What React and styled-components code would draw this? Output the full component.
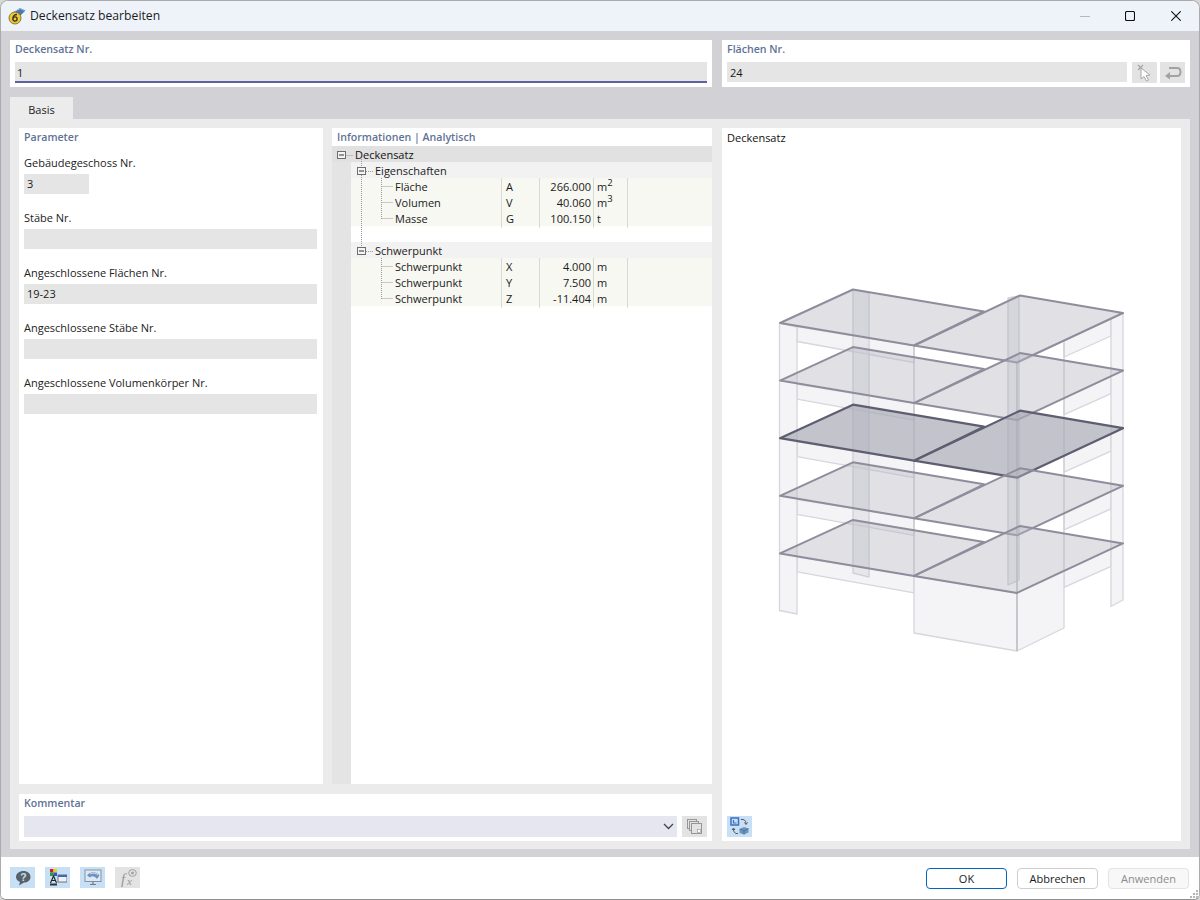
import React from "react";
import styled, { createGlobalStyle } from "styled-components";

const Global = createGlobalStyle`
  html, body { margin: 0; padding: 0; background: #d8d8d8; }
  * { box-sizing: border-box; }
  body { font-family: "Open Sans", "Noto Sans", "Liberation Sans", sans-serif; font-size: 11px; color: #1a1a1a; }
`;

const Win = styled.div`
  width: 1200px; height: 900px; display: flex; flex-direction: column; overflow: hidden;
  border: 1px solid #ababab; border-bottom-color: #8f8f8f; border-radius: 8px 8px 6px 6px; background: #fff;
`;
const TitleBar = styled.div`
  height: 30px; flex: none; display: flex; align-items: center; background: #eef3fa; padding-left: 7px;
`;
const TitleText = styled.div`
  font-size: 12.2px; margin-left: 4px; color: #1c1c1c; flex: 1; padding-bottom: 1px;
`;
const WinButtons = styled.div`display: flex; align-items: center; margin-right: 18px;`;
const WinSlot = styled.div`display: flex; margin-left: ${p => p.$gap || 0}px;`;
const Body = styled.div`
  flex: 1; background: #d2d1d6; padding: 9px 9px 8px; display: flex; flex-direction: column;
`;
const TopRow = styled.div`display: grid; grid-template-columns: 702px 468px; gap: 10px; height: 47px;`;
const TopPanel = styled.div`background: #fff; padding: 2px 5px 0; display: flex; flex-direction: column;`;
const SectionLabel = styled.div`
  font-weight: 600; color: #5f7296; font-size: 10.6px; line-height: 15px; height: 15px; white-space: nowrap;
`;
const FieldRow = styled.div`display: flex; margin-top: 5px; gap: 5px;`;
const PrimaryField = styled.div`
  flex: 1; height: 21px; background: #e5e5e5; border-bottom: 2px solid #5d61a6; padding-left: 2px; line-height: 22px;
`;
const Field = styled.div`
  height: 20px; width: ${p => p.$w ? p.$w + "px" : "auto"}; flex: ${p => p.$fill ? 1 : "none"};
  background: #e5e5e5; padding-left: 3px; line-height: ${p => p.$fill ? 22 : 20}px;
`;
const IconBtn = styled.div`
  width: 25px; height: 21px; flex: none; display: flex; align-items: center; justify-content: center;
  background: ${p => p.$blue ? "#c8e0f5" : "#e3e3e3"};
  margin-left: ${p => p.$pull ? -2 : 0}px;
`;
const TabRow = styled.div`margin-top: 10px; height: 22px; display: flex;`;
const Tab = styled.div`
  width: 63px; background: #ececec; text-align: center; line-height: 26px; color: #222;
`;
const Main = styled.div`
  height: 730px; background: #ebebeb; padding: 9px; display: grid; grid-template-columns: 693px 459px; gap: 10px;
`;
const LeftCol = styled.div`display: flex; flex-direction: column; gap: 10px;`;
const UpperGrid = styled.div`display: grid; grid-template-columns: 304px 380px; gap: 9px; height: 656px;`;
const Panel = styled.div`background: #fff; display: flex; flex-direction: column; min-width: 0;`;
const ParamPanel = styled(Panel)`padding: 2px 6px 0 5px;`;
const ParamGroup = styled.div`
  display: flex; flex-direction: column; margin-top: ${p => p.$first ? 10 : 0}px; height: 55px;
  & > label { line-height: 15px; height: 15px; margin-bottom: 4px; color: #222; white-space: nowrap; }
`;
const InfoHead = styled.div`padding: 2px 0 0 5px; height: 18px;`;
const Tree = styled.div`
  flex: 1; position: relative; background: linear-gradient(to right, #e4e4e4 19px, #fff 19px);
`;
const TreeLines = styled.svg`position: absolute; left: 0; top: 0; pointer-events: none;`;
const RootRow = styled.div`
  height: 16px; background: #e1e1e1; padding-left: 23px; line-height: 18px; color: #111;
`;
const GroupRow = styled.div`
  height: 16px; margin-left: 19px; background: #f2f2f2; padding-left: 24px; line-height: 18px;
`;
const BlankRow = styled.div`height: 16px; margin-left: 19px; background: #fff;`;
const LeafRow = styled.div`
  height: 16px; margin-left: 19px; background: #f7f8f2; line-height: 18px; display: grid;
  grid-template-columns: 151px 38px 54px 34px 1fr;
  & > div { border-right: 1px solid #d9d9d6; white-space: nowrap; }
  & > div:last-child { border-right: none; }
`;
const LeafName = styled.div`padding-left: 44px;`;
const LeafSym = styled.div`padding-left: 4px;`;
const LeafVal = styled.div`text-align: right; padding-right: 2px;`;
const LeafUnit = styled.div`
  padding-left: 3px;
  & sup { font-size: 9.5px; line-height: 0; position: relative; top: 0; vertical-align: super; }
`;
const CommentPanel = styled.div`background: #fff; height: 47px; padding: 2px 5px 0;`;
const CommentRow = styled.div`display: flex; gap: 5px; margin-top: 5px;`;
const Combo = styled.div`
  flex: 1; height: 21px; background: #e6e6f1; display: flex; align-items: center; justify-content: flex-end; padding-right: 3px;
`;
const PreviewPanel = styled(Panel)`padding: 2px 0 0 5px;`;
const PreviewTitle = styled.div`line-height: 15px; height: 15px; color: #111;`;
const PreviewCanvas = styled.div`flex: 1; min-height: 0; margin-left: -5px;`;
const PreviewFoot = styled.div`height: 25px; flex: none;`;
const Footer = styled.div`
  height: 42px; flex: none; background: #fff; display: flex; align-items: center; padding: 0 10px 0 9px; position: relative;
`;
const FootIcons = styled.div`display: flex; gap: 10px; flex: 1; margin-top: -1px;`;
const FootBtns = styled.div`display: flex; gap: 10px; margin-top: 1px;`;
const Btn = styled.div`
  width: 81px; height: 21px; border-radius: 4px; text-align: center; line-height: 20px; background: ${p => p.$disabled ? "#f8f8f8" : "#fff"};
  border: 1px solid ${p => p.$primary ? "#0067c0" : p.$disabled ? "#e4e4e4" : "#cfcfcf"};
  color: ${p => p.$disabled ? "#8c8c8c" : "#1a1a1a"};
`;
const Grip = styled.svg`position: absolute; right: 0; bottom: 0;`;

/* ---------- structural drawing ---------- */
const DY = 57.6;
const P = pts => pts.map(p => p.join(",")).join(" ");
const shift = (pts, d) => pts.map(([x, y]) => [x, y + d]);

const slabL = [[780, 323], [853, 289.5], [984, 311.5], [914, 345.5]];
const slabR = [[914, 345.5], [1020, 295.5], [1123, 313], [1017, 362.5]];

const Building = () => {
  const ox = 722, oy = 145;
  const wall = { fill: "#f2f2f5", fillOpacity: 0.85, stroke: "#d6d6dc", strokeWidth: 1.3, strokeLinejoin: "round" };
  const col = { fill: "#d6d6dd", fillOpacity: 0.45, stroke: "#cfcfd6", strokeWidth: 1.3, strokeLinejoin: "round" };
  const level = [0, 1, 2, 3, 4];
  return (
    <svg width="459" height="670" viewBox={`${ox} ${oy} 459 670`} style={{ display: "block" }}>
      {/* beams left and right */}
      {level.map(i => (
        <g key={i}>
          <polygon points={P(shift([[797, 326.5], [914, 345.5], [914, 362.5], [797, 341.5]], i * DY))} {...wall} />
          <polygon points={P(shift([[1064, 340.5], [1111, 318.6], [1111, 336], [1064, 357]], i * DY))} {...wall} />
        </g>
      ))}
      {/* back columns */}
      <polygon points={P([[853, 289.5], [869, 293], [869, 577], [853, 573]])} {...col} />
      <polygon points={P([[1008, 298], [1019, 296], [1019, 580], [1008, 585]])} {...col} />
      {/* front base wall */}
      <polygon points={P([[914, 576], [1017, 593], [1017, 651], [914, 633]])} {...wall} />
      <polygon points={P([[1017, 593], [1064, 570], [1064, 628], [1017, 651]])} {...wall} />
      {/* upright lines */}
      <line x1="914" y1="345" x2="914" y2="576" stroke="#c9c9d0" strokeWidth="1.4" />
      <line x1="1017" y1="362" x2="1017" y2="651" stroke="#c0c0c8" strokeWidth="1.6" />
      <line x1="1064" y1="343" x2="1064" y2="570" stroke="#d0d0d6" strokeWidth="1.4" />
      {/* corner columns */}
      <polygon points={P([[779.5, 323], [797, 327], [797, 614], [779.5, 610.5]])} {...wall} />
      <polygon points={P([[1111, 319], [1123, 313], [1123, 600], [1111, 606.5]])} {...wall} />
      {/* slabs */}
      {level.map(i => {
        const sel = i === 2;
        const fill = sel ? "#a9a9b7" : "#b5b4c0";
        const op = sel ? 0.7 : 0.42;
        const stroke = sel ? "#5f5d70" : "#8f8d9c";
        const sw = sel ? 2.2 : 2;
        const d = i * DY;
        return (
          <g key={i} fill={fill} fillOpacity={op} stroke={stroke} strokeWidth={sw} strokeLinejoin="round">
            <polygon points={P(shift(slabL, d))} />
            <polygon points={P(shift(slabR, d))} />
          </g>
        );
      })}
    </svg>
  );
};

/* ---------- icons ---------- */
const AppIcon = () => (
  <svg width="18" height="18" viewBox="0 0 18 18">
    <path d="M5 6 L12 1 L17.5 3.5 L11.5 9.5 Z" fill="#4d79ad" />
    <path d="M6 5 L12 1.5 L16.5 3.6" fill="none" stroke="#9cc0e4" strokeWidth="1" />
    <circle cx="7" cy="11" r="6" fill="#eec92f" stroke="#7a6a2c" strokeWidth="0.9" />
    <circle cx="7" cy="12" r="2.1" fill="none" stroke="#333" strokeWidth="1.3" />
    <path d="M5 11.5 C5 8.5 6.5 7.5 9 7.5" fill="none" stroke="#333" strokeWidth="1.3" />
  </svg>
);
const MinIcon = () => <svg width="10" height="10" style={{ display: "block" }}><line x1="0" y1="5.5" x2="10" y2="5.5" stroke="#b5b8bd" /></svg>;
const MaxIcon = () => <svg width="10" height="10" style={{ display: "block" }}><rect x="0.5" y="0.5" width="9" height="9" rx="1.4" fill="none" stroke="#111" strokeWidth="1.1" /></svg>;
const CloseIcon = () => <svg width="10" height="10" style={{ display: "block" }}><path d="M0.3 0.3 L9.7 9.7 M9.7 0.3 L0.3 9.7" stroke="#111" strokeWidth="1.1" /></svg>;
const PickIcon = () => (
  <svg width="18" height="18" viewBox="0 0 18 18">
    <path d="M2 1 L7 6 M7 1 L2 6" stroke="#a3a3a3" strokeWidth="1.1" />
    <path d="M5 4 L5 15 L8 12.5 L10.5 17 L12.5 16 L10 11.5 L14 11 Z" fill="#fff" stroke="#a8a8a8" strokeWidth="1" />
  </svg>
);
const ReturnIcon = () => (
  <svg width="18" height="15" viewBox="0 0 18 15">
    <path d="M4 11 H13 C16 11 16.5 9 16.5 7 C16.5 4.5 15 3 13 3 H5" fill="none" stroke="#a2a2a2" strokeWidth="2" />
    <path d="M6 7 L1 11 L6 14.5 Z" fill="#a2a2a2" />
  </svg>
);
const Chevron = () => <svg width="11" height="7" viewBox="0 0 11 7"><path d="M1 1 L5.5 5.5 L10 1" fill="none" stroke="#444" strokeWidth="1.3" /></svg>;
const CopyIcon = () => (
  <svg width="15" height="15" viewBox="0 0 15 15" fill="#e3e3e3" stroke="#969696" strokeWidth="1">
    <rect x="0.5" y="0.5" width="9" height="9" />
    <rect x="2.5" y="2.5" width="9" height="9" />
    <rect x="4.5" y="4.5" width="10" height="10" />
    <rect x="10.5" y="10.5" width="3" height="3" fill="#fff" strokeWidth="0.6" />
  </svg>
);
const ViewSwapIcon = () => (
  <svg width="20" height="19" viewBox="0 0 20 19">
    <rect x="1" y="1" width="7.5" height="7" fill="#c8e0f5" stroke="#3b6fc0" strokeWidth="1.5" />
    <path d="M3.5 3 V6 H6.5" fill="none" stroke="#3b6fc0" strokeWidth="1.2" />
    <path d="M11 2.5 C14 2 16 3.5 16 6.5 M14.5 5.5 L16 7.5 L17.5 5.5" fill="none" stroke="#555" strokeWidth="1" />
    <path d="M8 16.5 C5 17 3.5 15 3.5 12 M2 13 L3.5 11 L5 13" fill="none" stroke="#555" strokeWidth="1" />
    <path d="M9.5 12 L14 10 L18.5 11.5 V15.5 L14 17.5 L9.5 16 Z" fill="#6d94bb" />
    <path d="M9.5 12 L14 13.8 L18.5 11.5 M14 13.8 V17.5" fill="none" stroke="#3f6690" strokeWidth="0.7" />
  </svg>
);
const HelpIcon = () => (
  <svg width="18" height="16" viewBox="0 0 18 16">
    <path d="M9.5 1 C13.5 1 16.5 3.5 16.5 7 C16.5 10.5 13.5 12.5 10 12.5 L5 15.5 L6 12 C3.5 11 2 9.3 2 7 C2 3.5 5.5 1 9.5 1 Z" fill="#596068" />
    <text x="9.4" y="11" textAnchor="middle" fontSize="10.5" fontWeight="700" fill="#c8e0f5" fontFamily="Liberation Sans, sans-serif">?</text>
  </svg>
);
const ColorIcon = () => (
  <svg width="18" height="17" viewBox="0 0 18 17">
    <rect x="1" y="0" width="3.5" height="3.5" fill="#d02020" />
    <rect x="4.5" y="0" width="3.5" height="3.5" fill="#e8d020" />
    <rect x="1" y="3.5" width="3.5" height="3.5" fill="#2a9a3a" />
    <rect x="4.5" y="3.5" width="3.5" height="3.5" fill="#2a5ad0" />
    <path d="M1.5 14 L4.5 7 L7.5 14 M2.8 11.5 H6.2" fill="none" stroke="#222" strokeWidth="1.1" />
    <rect x="1" y="14.5" width="7" height="2" fill="#333" />
    <rect x="9" y="6" width="9" height="7" fill="#eef2f6" stroke="#555" strokeWidth="0.8" />
    <rect x="9" y="6" width="9" height="2" fill="#3f66c0" />
  </svg>
);
const MonitorIcon = () => (
  <svg width="18" height="17" viewBox="0 0 18 17">
    <rect x="1" y="1" width="16" height="11.5" fill="#dbe9f6" stroke="#87929e" strokeWidth="1" />
    <path d="M3 6.5 C6 2.5 12 2 15.5 6.5 L13 10 C11 7 7.5 6.5 6 8.5 Z" fill="#6d93bd" />
    <path d="M6 5 C8.5 3.5 12 4 14 6" fill="none" stroke="#e6f0fa" strokeWidth="0.8" />
    <path d="M9 12.5 V15.5 M6 15.5 H12" stroke="#6f7a86" strokeWidth="1.2" />
  </svg>
);
const FxIcon = () => (
  <svg width="20" height="19" viewBox="0 0 20 19">
    <text x="3" y="16" fontSize="15" fontStyle="italic" fill="#979797" fontFamily="Liberation Serif, serif">f</text>
    <text x="9" y="16.5" fontSize="11" fontStyle="italic" fill="#979797" fontFamily="Liberation Serif, serif">x</text>
    <ellipse cx="14.5" cy="5" rx="3.8" ry="3.4" fill="none" stroke="#a2a2a2" strokeWidth="1" />
    <circle cx="14.5" cy="5" r="1.5" fill="#a2a2a2" />
  </svg>
);

/* ---------- data ---------- */
const rowsA = [
  ["Fläche", "A", "266.000", "m", "2"],
  ["Volumen", "V", "40.060", "m", "3"],
  ["Masse", "G", "100.150", "t"],
];
const rowsB = [
  ["Schwerpunkt", "X", "4.000", "m"],
  ["Schwerpunkt", "Y", "7.500", "m"],
  ["Schwerpunkt", "Z", "-11.404", "m"],
];
const params = [
  { label: "Gebäudegeschoss Nr.", value: "3", w: 65 },
  { label: "Stäbe Nr." },
  { label: "Angeschlossene Flächen Nr.", value: "19-23" },
  { label: "Angeschlossene Stäbe Nr." },
  { label: "Angeschlossene Volumenkörper Nr." },
];

const Leaf = ({ r }) => (
  <LeafRow>
    <LeafName>{r[0]}</LeafName>
    <LeafSym>{r[1]}</LeafSym>
    <LeafVal>{r[2]}</LeafVal>
    <LeafUnit>{r[3]}{r[4] && <sup>{r[4]}</sup>}</LeafUnit>
    <div />
  </LeafRow>
);

const Expander = ({ x, y }) => (
  <g>
    <rect x={x + 0.5} y={y + 0.5} width="8" height="7" fill="#f4f4f4" stroke="#6d6d6d" />
    <line x1={x + 2} x2={x + 7} y1={y + 4} y2={y + 4} stroke="#333" />
  </g>
);

const Connectors = () => (
  <TreeLines width="100" height="170">
    <g stroke="#9a9a9a" strokeDasharray="1 1" fill="none">
      <path d="M14.5 9.5 H21" />
      <path d="M29.5 13 V101" />
      <path d="M34 25.5 H41 M34 105.5 H41" />
      <path d="M49.5 32 V73 M49.5 40.5 H61 M49.5 56.5 H61 M49.5 72.5 H61" />
      <path d="M49.5 112 V153 M49.5 120.5 H61 M49.5 136.5 H61 M49.5 152.5 H61" />
    </g>
    <Expander x={5} y={5} />
    <Expander x={25} y={21} />
    <Expander x={25} y={101} />
  </TreeLines>
);

export default function App() {
  return (
    <Win>
      <Global />
      <TitleBar>
        <AppIcon />
        <TitleText>Deckensatz bearbeiten</TitleText>
        <WinButtons>
          <WinSlot><MinIcon /></WinSlot>
          <WinSlot $gap={35}><MaxIcon /></WinSlot>
          <WinSlot $gap={36}><CloseIcon /></WinSlot>
        </WinButtons>
      </TitleBar>
      <Body>
        <TopRow>
          <TopPanel>
            <SectionLabel>Deckensatz Nr.</SectionLabel>
            <FieldRow><PrimaryField>1</PrimaryField></FieldRow>
          </TopPanel>
          <TopPanel>
            <SectionLabel>Flächen Nr.</SectionLabel>
            <FieldRow>
              <Field $fill>24</Field>
              <IconBtn><PickIcon /></IconBtn>
              <IconBtn $pull><ReturnIcon /></IconBtn>
            </FieldRow>
          </TopPanel>
        </TopRow>
        <TabRow><Tab>Basis</Tab></TabRow>
        <Main>
          <LeftCol>
            <UpperGrid>
              <ParamPanel>
                <SectionLabel>Parameter</SectionLabel>
                {params.map((p, i) => (
                  <ParamGroup key={p.label} $first={i === 0}>
                    <label>{p.label}</label>
                    <Field $w={p.w}>{p.value}</Field>
                  </ParamGroup>
                ))}
              </ParamPanel>
              <Panel>
                <InfoHead><SectionLabel>Informationen | Analytisch</SectionLabel></InfoHead>
                <Tree>
                  <RootRow>Deckensatz</RootRow>
                  <GroupRow>Eigenschaften</GroupRow>
                  {rowsA.map(r => <Leaf key={r[0]} r={r} />)}
                  <BlankRow />
                  <GroupRow>Schwerpunkt</GroupRow>
                  {rowsB.map(r => <Leaf key={r[1]} r={r} />)}
                  <Connectors />
                </Tree>
              </Panel>
            </UpperGrid>
            <CommentPanel>
              <SectionLabel>Kommentar</SectionLabel>
              <CommentRow>
                <Combo><Chevron /></Combo>
                <IconBtn><CopyIcon /></IconBtn>
              </CommentRow>
            </CommentPanel>
          </LeftCol>
          <PreviewPanel>
            <PreviewTitle>Deckensatz</PreviewTitle>
            <PreviewCanvas><Building /></PreviewCanvas>
            <PreviewFoot><IconBtn $blue><ViewSwapIcon /></IconBtn></PreviewFoot>
          </PreviewPanel>
        </Main>
      </Body>
      <Footer>
        <FootIcons>
          <IconBtn $blue><HelpIcon /></IconBtn>
          <IconBtn $blue><ColorIcon /></IconBtn>
          <IconBtn $blue><MonitorIcon /></IconBtn>
          <IconBtn><FxIcon /></IconBtn>
        </FootIcons>
        <FootBtns>
          <Btn $primary>OK</Btn>
          <Btn>Abbrechen</Btn>
          <Btn $disabled>Anwenden</Btn>
        </FootBtns>
        <Grip width="10" height="10" viewBox="0 0 10 10" fill="#b5b5b5">
          <rect x="7" y="1" width="2" height="2" /><rect x="4" y="4" width="2" height="2" /><rect x="7" y="4" width="2" height="2" />
          <rect x="1" y="7" width="2" height="2" /><rect x="4" y="7" width="2" height="2" /><rect x="7" y="7" width="2" height="2" />
        </Grip>
      </Footer>
    </Win>
  );
}
